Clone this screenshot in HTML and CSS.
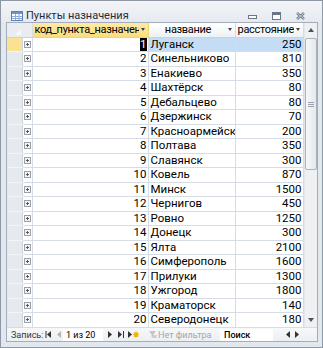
FILE: index.html
```html
<!DOCTYPE html>
<html lang="ru">
<head>
  <meta charset="UTF-8">
  <meta name="viewport" content="width=device-width, initial-scale=1.0">
  <title>Пункты назначения</title>
  <link rel="stylesheet" href="styles.css">
</head>
<body>
  <div class="window">

    <!-- Title bar -->
    <div class="titlebar">
      <svg class="app-icon" width="12" height="10" viewBox="0 0 12 10">
        <rect x="0.5" y="0.5" width="11" height="9" fill="#fff" stroke="#5d80b6"/>
        <rect x="1" y="1" width="10" height="2" fill="#6f94cc"/>
        <path d="M1 5.5h10M1 7.5h10M4.5 3v6M8 3v6" stroke="#91abd2"/>
      </svg>
      <span class="title">Пункты назначения</span>
      <div class="controls">
        <svg width="9" height="5" viewBox="0 0 9 5"><rect x="0.5" y="0.5" width="8" height="3" fill="#fff" stroke="#6a7688"/></svg>
        <svg width="9" height="8" viewBox="0 0 9 8"><rect x="0.5" y="0.5" width="8" height="7" fill="#fff" stroke="#6a7688"/><rect x="1" y="1" width="7" height="2" fill="#6a7688"/></svg>
        <svg width="9" height="8" viewBox="0 0 9 8"><path d="M1 1l7 6M8 1l-7 6" stroke="#6a7688" stroke-width="2.4"/><path d="M1 1l7 6M8 1l-7 6" stroke="#e4e8ee" stroke-width="0.8"/></svg>
      </div>
    </div>

    <!-- Datasheet -->
    <div class="frame">
      <div class="grid-area">
        <table class="datasheet">
          <colgroup>
            <col class="c-sel"><col class="c-exp"><col class="c-code"><col class="c-name"><col class="c-dist">
          </colgroup>
          <thead>
            <tr>
              <th class="corner" colspan="2"><span class="corner-mark"></span></th>
              <th class="hd hd-active"><div class="hd-in"><span class="hd-text left">код_пункта_назначения</span><span class="drop"></span></div></th>
              <th class="hd"><div class="hd-in"><span class="hd-text">название</span><span class="drop"></span></div></th>
              <th class="hd"><div class="hd-in"><span class="hd-text">расстояние</span><span class="drop"></span></div></th>
            </tr>
          </thead>
          <tbody>
            <tr class="current"><td class="sel"></td><td class="exp"><i class="plus"></i></td><td class="num"><span class="caret">1</span></td><td class="name">Луганск</td><td class="num">250</td></tr>
            <tr><td class="sel"></td><td class="exp"><i class="plus"></i></td><td class="num">2</td><td class="name">Синельниково</td><td class="num">810</td></tr>
            <tr><td class="sel"></td><td class="exp"><i class="plus"></i></td><td class="num">3</td><td class="name">Енакиево</td><td class="num">350</td></tr>
            <tr><td class="sel"></td><td class="exp"><i class="plus"></i></td><td class="num">4</td><td class="name">Шахтёрск</td><td class="num">80</td></tr>
            <tr><td class="sel"></td><td class="exp"><i class="plus"></i></td><td class="num">5</td><td class="name">Дебальцево</td><td class="num">80</td></tr>
            <tr><td class="sel"></td><td class="exp"><i class="plus"></i></td><td class="num">6</td><td class="name">Дзержинск</td><td class="num">70</td></tr>
            <tr><td class="sel"></td><td class="exp"><i class="plus"></i></td><td class="num">7</td><td class="name">Красноармейск</td><td class="num">200</td></tr>
            <tr><td class="sel"></td><td class="exp"><i class="plus"></i></td><td class="num">8</td><td class="name">Полтава</td><td class="num">350</td></tr>
            <tr><td class="sel"></td><td class="exp"><i class="plus"></i></td><td class="num">9</td><td class="name">Славянск</td><td class="num">300</td></tr>
            <tr><td class="sel"></td><td class="exp"><i class="plus"></i></td><td class="num">10</td><td class="name">Ковель</td><td class="num">870</td></tr>
            <tr><td class="sel"></td><td class="exp"><i class="plus"></i></td><td class="num">11</td><td class="name">Минск</td><td class="num">1500</td></tr>
            <tr><td class="sel"></td><td class="exp"><i class="plus"></i></td><td class="num">12</td><td class="name">Чернигов</td><td class="num">450</td></tr>
            <tr><td class="sel"></td><td class="exp"><i class="plus"></i></td><td class="num">13</td><td class="name">Ровно</td><td class="num">1250</td></tr>
            <tr><td class="sel"></td><td class="exp"><i class="plus"></i></td><td class="num">14</td><td class="name">Донецк</td><td class="num">300</td></tr>
            <tr><td class="sel"></td><td class="exp"><i class="plus"></i></td><td class="num">15</td><td class="name">Ялта</td><td class="num">2100</td></tr>
            <tr><td class="sel"></td><td class="exp"><i class="plus"></i></td><td class="num">16</td><td class="name">Симферополь</td><td class="num">1600</td></tr>
            <tr><td class="sel"></td><td class="exp"><i class="plus"></i></td><td class="num">17</td><td class="name">Прилуки</td><td class="num">1300</td></tr>
            <tr><td class="sel"></td><td class="exp"><i class="plus"></i></td><td class="num">18</td><td class="name">Ужгород</td><td class="num">1800</td></tr>
            <tr><td class="sel"></td><td class="exp"><i class="plus"></i></td><td class="num">19</td><td class="name">Краматорск</td><td class="num">140</td></tr>
            <tr><td class="sel"></td><td class="exp"><i class="plus"></i></td><td class="num">20</td><td class="name">Северодонецк</td><td class="num">180</td></tr>
          </tbody>
        </table>

        <!-- Vertical scrollbar -->
        <div class="vscroll">
          <div class="sbtn"><span class="tri up"></span></div>
          <div class="track">
            <div class="thumb"><span class="grip"></span></div>
          </div>
          <div class="sbtn"><span class="tri down"></span></div>
        </div>
      </div>

      <!-- Record navigation -->
      <div class="navbar">
        <span class="nav-label">Запись:</span>
        <svg class="nav-first" width="7" height="7" viewBox="0 0 7 7"><path d="M1 0v7" stroke="#333"/><path d="M6 0v7L2 3.5z" fill="#333"/></svg>
        <svg class="nav-prev" width="5" height="7" viewBox="0 0 5 7"><path d="M4 0v7L0 3.5z" fill="#b5b5b5"/></svg>
        <span class="rec-box">1 из 20</span>
        <svg class="nav-next" width="5" height="7" viewBox="0 0 5 7"><path d="M1 0v7l4-3.5z" fill="#333"/></svg>
        <svg class="nav-last" width="7" height="7" viewBox="0 0 7 7"><path d="M0 0v7l4-3.5z" fill="#333"/><path d="M5.5 0v7" stroke="#333"/></svg>
        <svg class="nav-new" width="11" height="7" viewBox="0 0 11 7"><path d="M0 0v7l4-3.5z" fill="#333"/><path d="M8 0.5v6M5 3.5h6M6 1.5l4 4M10 1.5l-4 4" stroke="#e8b800" stroke-width="1.2"/></svg>
        <span class="filter">
          <svg width="8" height="8" viewBox="0 0 8 8"><path d="M0 0h7L4.5 3.5V7L2.5 6V3.5z" fill="#c3c7cc"/><path d="M4.5 4l3 3M7.5 4l-3 3" stroke="#b0b4ba"/></svg>
          <span>Нет фильтра</span>
        </span>
        <span class="search">Поиск</span>
        <span class="hscroll">
          <svg width="5" height="7" viewBox="0 0 5 7"><path d="M4 0v7L0 3.5z" fill="#333"/></svg>
          <svg width="5" height="7" viewBox="0 0 5 7"><path d="M1 0v7l4-3.5z" fill="#333"/></svg>
        </span>
      </div>
    </div>
  </div>
</body>
</html>
```

FILE: styles.css
```css
/* Global */
* {
  box-sizing: border-box;
}

body {
  margin: 0;
  font-family: Roboto, "Segoe UI", Arial, sans-serif;
  font-size: 11.5px;
  color: #000;
  background: #fff;
}

/* Window */
.window {
  width: 323px;
  height: 348px;
  border: 1px solid #8d97a5;
  background: #e3e8ee;
  padding: 0 4px 5px 5px;
  display: flex;
  flex-direction: column;
}

.titlebar {
  flex-shrink: 0;
  height: 21px;
  display: flex;
  align-items: center;
  margin: 0 -4px 0 -5px;
  padding: 8px 0 0 10px;
  background: linear-gradient(#f2f4f7, #e6eaf0);
}

.app-icon {
  margin-right: 3px;
}

.title {
  font-size: 11px;
  color: #1f2d3d;
}

.controls {
  margin-left: auto;
  display: flex;
  align-items: center;
  gap: 15px;
  padding-right: 17px;
}

.controls svg:first-child {
  margin-top: 4px;
}

/* Datasheet frame */
.frame {
  flex: 1;
  min-height: 0;
  border: 1px solid #a4aebb;
  background: #fff;
  display: flex;
  flex-direction: column;
}

.grid-area {
  flex-shrink: 0;
  display: flex;
  height: 304px;
}

.datasheet {
  width: 296px;
  height: 304px;
  table-layout: fixed;
  border-collapse: collapse;
  border-spacing: 0;
}

.c-sel { width: 15px; }
.c-exp { width: 10px; }
.c-code { width: 116px; }
.c-name { width: 87px; }
.c-dist { width: 68px; }

/* Header */
thead tr {
  height: 14px;
}

th {
  padding: 0;
  font-weight: normal;
  font-size: 11px;
  letter-spacing: -0.3px;
  border-right: 1px solid #d5dce5;
  border-bottom: 1px solid #c9d2dd;
  background: linear-gradient(#ffffff, #eef1f5);
  white-space: nowrap;
}

.corner {
  position: relative;
  background: #e9ecf0;
}

.corner-mark {
  position: absolute;
  right: 11px;
  bottom: 2px;
  border-left: 6px solid transparent;
  border-bottom: 6px solid #f7f8fa;
}

.hd-active {
  background: linear-gradient(#fdeaa8, #f9dc7c);
  border-right-color: #f0d27c;
}

.hd-in {
  display: flex;
  align-items: center;
  height: 13px;
  padding: 0 3px 0 2px;
}

.hd-text {
  flex: 1;
  overflow: hidden;
  text-align: center;
}

.hd-text.left {
  text-align: left;
}

.drop {
  flex-shrink: 0;
  margin-left: 2px;
  border-left: 2.5px solid transparent;
  border-right: 2.5px solid transparent;
  border-top: 3px solid #444;
}

/* Rows */
tbody tr {
  height: 14.5px;
}

td {
  padding: 0 1px 0 2px;
  border-right: 1px solid #d5dce5;
  border-bottom: 1px solid #d5dce5;
  white-space: nowrap;
  overflow: hidden;
  line-height: 13px;
}

td.sel {
  background: #e6e9ee;
  border-bottom-color: #f3f5f7;
  border-right-color: #d0d6de;
}

td.exp {
  padding: 0;
  text-align: center;
}

.plus {
  display: inline-block;
  width: 7px;
  height: 7px;
  margin-top: 3px;
  vertical-align: top;
  border: 1px solid #9aa1aa;
  background: linear-gradient(#5a5a5a, #5a5a5a) center / 3px 1px no-repeat,
              linear-gradient(#5a5a5a, #5a5a5a) center / 1px 3px no-repeat,
              #f4f4f4;
}

td.num {
  text-align: right;
  padding-right: 1px;
}

.current td.sel {
  background: #fbe292;
}

.current td.name,
.current td:last-child {
  background: #c4ddf4;
}

.caret {
  background: #000;
  color: #fff;
}

/* Vertical scrollbar */
.vscroll {
  width: 14px;
  display: flex;
  flex-direction: column;
  background: #eef0f2;
  border-left: 1px solid #e4e7ea;
}

.sbtn {
  height: 14px;
  display: flex;
  align-items: center;
  justify-content: center;
}

.tri {
  border-left: 3.5px solid transparent;
  border-right: 3.5px solid transparent;
}

.tri.up {
  border-bottom: 4px solid #4a5360;
}

.tri.down {
  border-top: 4px solid #4a5360;
}

.track {
  flex: 1;
  padding-top: 1px;
}

.thumb {
  height: 132px;
  width: 12px;
  border: 1px solid #a9b1bb;
  border-radius: 2px;
  background: linear-gradient(90deg, #f6f7f9, #e4e8ec);
  display: flex;
  align-items: center;
  justify-content: center;
}

.grip {
  width: 6px;
  height: 5px;
  border-top: 1px solid #9aa2ad;
  border-bottom: 1px solid #9aa2ad;
  background: linear-gradient(#9aa2ad, #9aa2ad) center / 6px 1px no-repeat;
}

/* Navigation bar */
.navbar {
  flex: 1;
  display: flex;
  align-items: center;
  white-space: nowrap;
  font-size: 9px;
  color: #3a3a3a;
  background: linear-gradient(#f7f8fa, #eceff3);
  border-top: 1px solid #d5dce5;
  padding-left: 4px;
}

.navbar > * {
  flex-shrink: 0;
}

.nav-label {
  width: 34px;
}

.nav-first {
  margin-right: 5px;
}

.nav-prev {
  margin-right: 1px;
}

.rec-box {
  width: 40px;
  height: 12px;
  background: #fff;
  padding-left: 3px;
  line-height: 12px;
  color: #000;
  margin-right: 4px;
}

.nav-next {
  margin-right: 6px;
}

.nav-last {
  margin-right: 3px;
}

.nav-new {
  margin-right: 10px;
}

.filter {
  display: flex;
  align-items: center;
  gap: 0;
  color: #a3a7ac;
  width: 71px;
}

.filter span {
  margin-left: 1px;
}

.search {
  width: 53px;
  height: 12px;
  line-height: 12px;
  background: #fff;
  padding-left: 4px;
  color: #000;
  font-weight: 500;
}

.hscroll {
  margin-left: 13px;
  display: flex;
  gap: 3px;
}
```
